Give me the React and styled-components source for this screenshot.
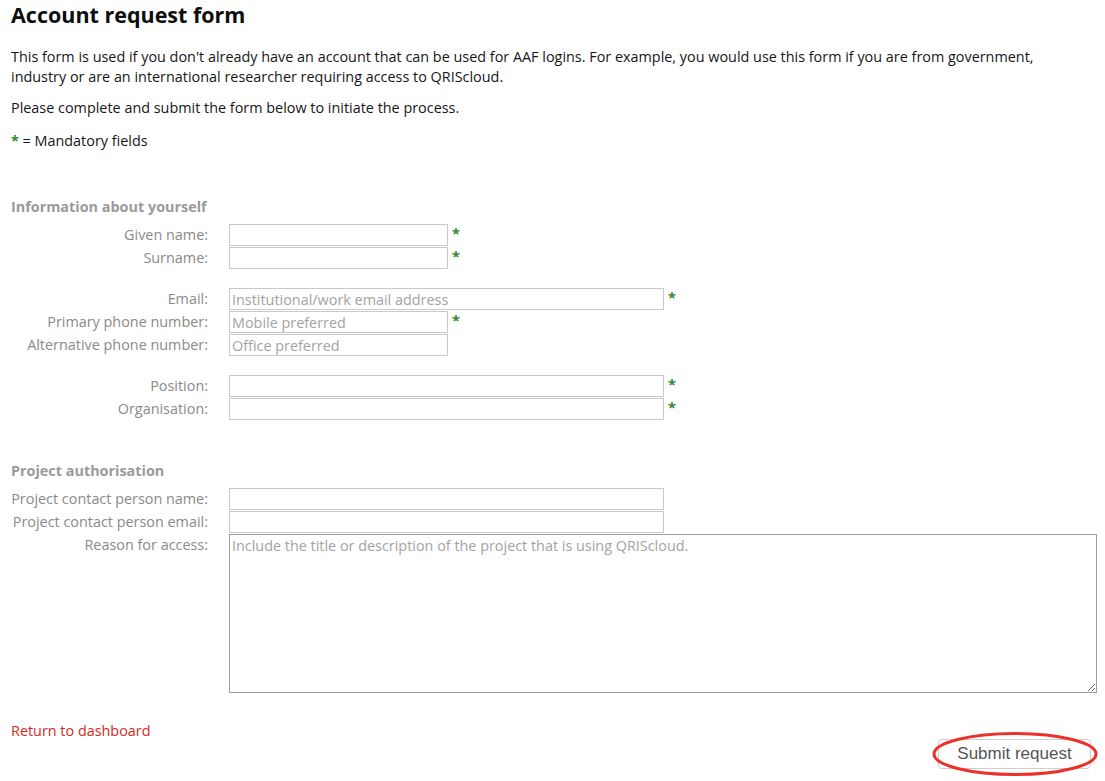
import React from 'react';
import styled, { createGlobalStyle } from 'styled-components';

const GlobalStyle = createGlobalStyle`
  body {
    margin: 0;
    background: #fff;
    font-family: "Open Sans", "Liberation Sans", sans-serif;
    font-size: 14.4px;
    color: #161616;
  }
`;

const sections = [
  {
    title: 'Information about yourself',
    groups: [
      [
        { label: 'Given name:', size: 'narrow', required: true },
        { label: 'Surname:', size: 'narrow', required: true },
      ],
      [
        { label: 'Email:', size: 'wide', required: true, placeholder: 'Institutional/work email address' },
        { label: 'Primary phone number:', size: 'narrow', required: true, placeholder: 'Mobile preferred' },
        { label: 'Alternative phone number:', size: 'narrow', placeholder: 'Office preferred' },
      ],
      [
        { label: 'Position:', size: 'wide', required: true },
        { label: 'Organisation:', size: 'wide', required: true },
      ],
    ],
  },
  {
    title: 'Project authorisation',
    groups: [
      [
        { label: 'Project contact person name:', size: 'wide' },
        { label: 'Project contact person email:', size: 'wide' },
        {
          label: 'Reason for access:',
          size: 'full',
          multiline: true,
          placeholder: 'Include the title or description of the project that is using QRIScloud.',
        },
      ],
    ],
  },
];

const App = () => {
  return (
    <>
      <GlobalStyle />
      <Page>
        <Title>Account request form</Title>
        <Intro>
          This form is used if you don't already have an account that can be used for AAF logins. For example, you
          would use this form if you are from government, industry or are an international researcher requiring
          access to QRIScloud.
        </Intro>
        <Intro>Please complete and submit the form below to initiate the process.</Intro>
        <Intro>
          <Star>*</Star> = Mandatory fields
        </Intro>

        {sections.map(section => (
          <Section key={section.title}>
            <SectionTitle>{section.title}</SectionTitle>
            {section.groups.map((group, i) => (
              <FieldGroup key={i}>
                {group.map(field => (
                  <React.Fragment key={field.label}>
                    <Label>{field.label}</Label>
                    <Control>
                      {field.multiline ? (
                        <TextArea placeholder={field.placeholder} />
                      ) : (
                        <Input $size={field.size} placeholder={field.placeholder} />
                      )}
                      {field.required && <FieldStar>*</FieldStar>}
                    </Control>
                  </React.Fragment>
                ))}
              </FieldGroup>
            ))}
          </Section>
        ))}

        <Footer>
          <BackLink href="#">Return to dashboard</BackLink>
          <SubmitWrap>
            <SubmitButton type="button">Submit request</SubmitButton>
            <Circle viewBox="0 0 166 44" preserveAspectRatio="none">
              <ellipse cx="83" cy="22" rx="81" ry="20.5" fill="none" stroke="#e8322a" strokeWidth="3" />
            </Circle>
          </SubmitWrap>
        </Footer>
      </Page>
    </>
  );
};

export default App;

const Page = styled.div`
  padding: 0 8px 12px 11px;
`;

const Title = styled.h1`
  margin: 0 0 17px;
  font-size: 21.5px;
  font-weight: 700;
  line-height: 30px;
  color: #0d0d0d;
`;

const Intro = styled.p`
  margin: 0 0 11px;
  line-height: 20px;
  padding-right: 40px;

  &:last-of-type {
    margin-top: 13px;
    margin-bottom: 0;
  }
`;

const Star = styled.span`
  color: #2e8b2e;
  font-weight: 700;
`;

const Section = styled.section`
  margin-top: 46px;

  & + & {
    margin-top: 41px;
  }
`;

const SectionTitle = styled.h3`
  margin: 0 0 7px;
  font-size: 14.4px;
  font-weight: 700;
  line-height: 20px;
  color: #9a9a9a;
`;

const FieldGroup = styled.div`
  display: grid;
  grid-template-columns: 197px 1fr;
  column-gap: 21px;
  row-gap: 1px;

  & + & {
    margin-top: 19px;
  }
`;

const Label = styled.div`
  text-align: right;
  line-height: 22px;
  color: #8a8a8a;
  white-space: nowrap;
`;

const Control = styled.div`
  display: flex;
  align-items: flex-start;
  gap: 4px;
`;

const widths = { narrow: '219px', wide: '435px', full: '100%' };

const Input = styled.input`
  box-sizing: border-box;
  width: ${props => widths[props.$size]};
  height: 22px;
  margin: 0;
  padding: 0 2px;
  border: 1px solid #c9c9c9;
  border-radius: 0;
  font-family: "Open Sans", "Liberation Sans", sans-serif;
  font-size: 14.4px;
  color: #333;
  outline: none;

  &::placeholder {
    color: #a3a3a3;
  }
`;

const TextArea = styled.textarea`
  box-sizing: border-box;
  width: 100%;
  height: 159px;
  margin: 0;
  padding: 1px 2px;
  border: 1px solid #9d9d9d;
  border-radius: 0;
  font-family: "Open Sans", "Liberation Sans", sans-serif;
  font-size: 14.4px;
  line-height: 20px;
  color: #333;
  outline: none;

  &::placeholder {
    color: #a3a3a3;
  }
`;

const FieldStar = styled.span`
  color: #2e8b2e;
  font-weight: 700;
  line-height: 20px;
`;

const Footer = styled.div`
  display: flex;
  justify-content: space-between;
  align-items: flex-start;
  margin-top: 28px;
  padding-right: 6px;
`;

const BackLink = styled.a`
  line-height: 20px;
  color: #d32a22;
  text-decoration: none;
`;

const SubmitWrap = styled.div`
  position: relative;
  margin-top: 18px;
`;

const SubmitButton = styled.button`
  box-sizing: border-box;
  display: block;
  width: 153px;
  height: 30px;
  padding: 0;
  background: #fff;
  border: 1px solid #cfcfcf;
  border-radius: 4px;
  font-family: "Liberation Sans", Arial, sans-serif;
  font-size: 17px;
  color: #555;
`;

const Circle = styled.svg`
  position: absolute;
  left: -6px;
  top: -7px;
  width: 166px;
  height: 44px;
  overflow: visible;
  pointer-events: none;
`;
